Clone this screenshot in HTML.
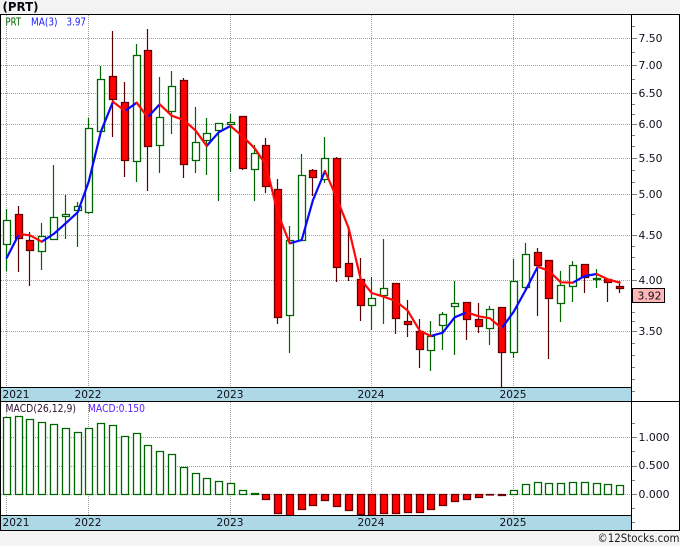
<!DOCTYPE html>
<html><head><meta charset="utf-8"><title>(PRT)</title>
<style>
html,body{margin:0;padding:0;background:#f3f3f3;width:680px;height:546px;overflow:hidden}
svg{display:block}
text{font-family:"DejaVu Sans","Liberation Sans",sans-serif;font-size:11px;fill:#10101c}
</style></head><body>
<svg width="680" height="546" viewBox="0 0 680 546" xmlns="http://www.w3.org/2000/svg">
<rect width="680" height="546" fill="#f3f3f3"/>
<rect x="0" y="14" width="680" height="516" fill="#fff"/>
<!-- grid -->
<g stroke="#a0a0a0" stroke-width="1" stroke-dasharray="1 1" fill="none">
<path d="M1 38.500H632M1 65.500H632M1 93.500H632M1 124.500H632M1 158.500H632M1 194.500H632M1 235.500H632M1 280.500H632M1 331.500H632"/>
<path d="M1 437.500H632M1 466.500H632M1 494.500H632"/>
<path d="M6.500 15V387M88.500 15V387M230.500 15V387M371.500 15V387M513.500 15V387"/>
<path d="M6.500 402V515M88.500 402V515M230.500 402V515M371.500 402V515M513.500 402V515"/>
</g>
<!-- green candles -->
<path stroke="#006400" stroke-width="1.200" fill="none" d="M6.500 209V271M41.500 223V270M53.500 165V239M65.500 195V239M77.500 202V247M88.500 118V214M100.500 66V132M136.500 44V182M159.500 77V173M171.500 71V134M195.500 107V173M206.500 118V175M218.500 124V201M230.500 114V172M254.500 145V201M289.500 226V353M301.500 154V240M324.500 137V183M371.500 277V330M383.500 239V324M430.500 321V371M442.500 312V350M454.500 281V355M489.500 306V345M513.500 259V358M525.500 243V290M560.500 271V322M572.500 261V302M596.500 269V288"/>
<path stroke="#006400" stroke-width="1.300" fill="#fff" d="M3.500 220.500h7v24h-7zM38.500 236.500h7v15h-7zM50.500 217.500h7v22h-7zM62.500 214.500h7v2h-7zM74.500 206.500h7v4h-7zM85.500 128.500h7v84h-7zM97.500 79.500h7v52h-7zM133.500 55.500h7v106h-7zM156.500 117.500h7v28h-7zM168.500 86.500h7v25h-7zM192.500 142.500h7v18h-7zM203.500 133.500h7v7h-7zM215.500 123.500h7v7h-7zM227.500 122.500h7v2h-7zM251.500 153.500h7v16h-7zM286.500 240.500h7v75h-7zM298.500 175.500h7v65h-7zM321.500 158.500h7v21h-7zM368.500 298.500h7v7h-7zM380.500 288.500h7v7h-7zM427.500 336.500h7v14h-7zM439.500 314.500h7v11h-7zM451.500 303.500h7v3h-7zM486.500 309.500h7v19h-7zM510.500 281.500h7v71h-7zM522.500 254.500h7v33h-7zM557.500 285.500h7v18h-7zM569.500 265.500h7v21h-7zM593.500 278.500h7v1h-7z"/>
<!-- red candles -->
<path stroke="#5a0000" stroke-width="1.200" fill="none" d="M18.500 206V272M29.500 232V286M112.500 31V137M124.500 82V177M147.500 29V191M183.500 78V178M242.500 116V170M265.500 138V193M277.500 179V324M312.500 169V196M336.500 157V282M348.500 226V281M360.500 258V321M395.500 283V334M407.500 300V337M419.500 319V368M466.500 302V340M478.500 303V333M501.500 307V387M537.500 248V316M548.500 260V359M584.500 264V293M607.500 279V302M619.500 281V293"/>
<path stroke="#660000" stroke-width="1.300" fill="#f00" d="M15.500 214.500h7v24h-7zM26.500 240.500h7v10h-7zM109.500 76.500h7v23h-7zM121.500 102.500h7v58h-7zM144.500 50.500h7v96h-7zM180.500 80.500h7v84h-7zM239.500 116.500h7v52h-7zM262.500 145.500h7v41h-7zM274.500 189.500h7v128h-7zM309.500 170.500h7v7h-7zM333.500 158.500h7v109h-7zM345.500 263.500h7v13h-7zM357.500 279.500h7v26h-7zM392.500 283.500h7v35h-7zM404.500 321.500h7v3h-7zM416.500 331.500h7v18h-7zM463.500 302.500h7v17h-7zM475.500 319.500h7v7h-7zM498.500 307.500h7v45h-7zM534.500 252.500h7v13h-7zM545.500 260.500h7v38h-7zM581.500 264.500h7v13h-7zM604.500 279.500h7v3h-7zM616.500 286.500h7v2h-7z"/>
<!-- moving average -->
<g fill="none" stroke-width="2.200" stroke-linejoin="round" stroke-linecap="round">
<g stroke="#0808ff">
<polyline points="6.800,257.700 19,234"/>
<polyline points="41.700,241.700 53.700,234 65.700,223.300 77.700,212.300 88.700,181.700 101,131.300 113,101.700"/>
<polyline points="125,111 136.700,102.700"/>
<polyline points="147.700,117.300 159.700,104.300"/>
<polyline points="206.700,146 218.700,132.300 230.500,126"/>
<polyline points="289.700,243.300 301.700,240 313,200 325,171"/>
<polyline points="430.700,336 442.700,332.700 454.700,317.300 466.700,312.300"/>
<polyline points="501.700,328.300 513.700,311.700 525.700,290 537.700,266.700"/>
<polyline points="572.700,282.700 584.700,276 596.700,274"/>
</g>
<g stroke="#ff0808">
<polyline points="19,234 30,235.300 41.700,241.700"/>
<polyline points="113,101.700 125,111"/>
<polyline points="136.700,102.700 147.700,117.300"/>
<polyline points="159.700,104.300 171.700,115.700 183.700,120 195.700,130.700 206.700,146"/>
<polyline points="230.500,126 243,136.700 254.700,148.300 266,165 277.700,213 289.700,243.300"/>
<polyline points="325,171 336.700,198 348.700,228.300 360.700,279.300 371.700,293 383.700,296.700 395.700,301 407.700,310.700 419.700,330.700 430.700,336"/>
<polyline points="466.700,312.300 478.700,316.300 490,318.300 501.700,328.300"/>
<polyline points="537.700,266.700 548.700,270.700 560.700,282.300 572.700,282.700"/>
<polyline points="596.700,274 607.700,279.300 619.700,282.700"/>
</g>
</g>
<!-- MACD bars -->
<path stroke="#006400" stroke-width="1.300" fill="#fff" d="M3.500 417.500h7v77h-7zM15.500 416.500h7v78h-7zM26.500 419.500h7v75h-7zM38.500 422.500h7v72h-7zM50.500 424.500h7v70h-7zM62.500 428.500h7v66h-7zM74.500 432.500h7v62h-7zM85.500 428.500h7v66h-7zM97.500 423.500h7v71h-7zM109.500 425.500h7v69h-7zM121.500 436.500h7v58h-7zM133.500 433.500h7v61h-7zM144.500 445.500h7v49h-7zM156.500 451.500h7v43h-7zM168.500 454.500h7v40h-7zM180.500 467.500h7v27h-7zM192.500 473.500h7v21h-7zM203.500 478.500h7v16h-7zM215.500 481.500h7v13h-7zM227.500 483.500h7v11h-7zM239.500 490.500h7v4h-7zM251.500 493.500h7v1h-7zM510.500 490.500h7v4h-7zM522.500 484.500h7v10h-7zM534.500 482.500h7v12h-7zM545.500 483.500h7v11h-7zM557.500 483.500h7v11h-7zM569.500 482.500h7v12h-7zM581.500 482.500h7v12h-7zM593.500 483.500h7v11h-7zM604.500 484.500h7v10h-7zM616.500 485.500h7v9h-7z"/>
<path stroke="#660000" stroke-width="1.300" fill="#f00" d="M262.500 494.500h7v5h-7zM274.500 494.500h7v19h-7zM286.500 494.500h7v25h-7zM298.500 494.500h7v15h-7zM309.500 494.500h7v11h-7zM321.500 494.500h7v6h-7zM333.500 494.500h7v12h-7zM345.500 494.500h7v16h-7zM357.500 494.500h7v20h-7zM368.500 494.500h7v25h-7zM380.500 494.500h7v19h-7zM392.500 494.500h7v19h-7zM404.500 494.500h7v18h-7zM416.500 494.500h7v18h-7zM427.500 494.500h7v15h-7zM439.500 494.500h7v11h-7zM451.500 494.500h7v7h-7zM463.500 494.500h7v5h-7zM475.500 494.500h7v3h-7zM486.500 494.500h7v0.500h-7zM498.500 494.500h7v1h-7z"/>
<!-- bands -->
<rect x="1" y="388" width="630" height="13" fill="#add8e6"/>
<rect x="1" y="516" width="630" height="14" fill="#add8e6"/>
<rect x="0" y="530" width="680" height="16" fill="#f3f3f3"/>
<!-- frame -->
<path stroke="#000" fill="none" d="M0 14.500H680M0 387.500H632M0 401.500H680M0 515.500H632M0 530.500H680M0.500 14V531M631.500 14V531M679.500 14V531"/>
<!-- ticks -->
<path stroke="#808080" fill="none" d="M632 26.500h3M632 52.500h3M632 79.500h3M632 104.500h3M632 114.500h3M632 135.500h3M632 146.500h3M632 170.500h3M632 182.500h3M632 214.500h3M632 246.500h3M632 257.500h3M632 269.500h3M632 312.500h3M632 321.500h3M632 343.500h3M632 355.500h3M632 367.500h3M632 379.500h3M632 391.500h3M632 423.500h3M632 451.500h3M632 480.500h3M632 508.500h3M632 522.500h3M632 38.500h5M632 65.500h5M632 93.500h5M632 124.500h5M632 158.500h5M632 194.500h5M632 235.500h5M632 280.500h5M632 331.500h5M632 437.500h5M632 466.500h5M632 494.500h5"/>
<!-- labels -->
<text x="2.500" y="11" style="font-weight:bold;font-size:12px;fill:#0a0a14" textLength="36" lengthAdjust="spacingAndGlyphs">(PRT)</text>
<text x="5.500" y="25.500" style="font-size:10.500px;fill:#006400" textLength="15.500" lengthAdjust="spacingAndGlyphs">PRT</text>
<text x="31" y="25.500" style="font-size:10.500px;fill:#1818ff" textLength="26.500" lengthAdjust="spacingAndGlyphs">MA(3)</text>
<text x="66.500" y="25.500" style="font-size:10.500px;fill:#1818ff" textLength="19.500" lengthAdjust="spacingAndGlyphs">3.97</text>
<text x="5.500" y="412" style="font-size:10.500px;fill:#301030" textLength="70.500" lengthAdjust="spacingAndGlyphs">MACD(26,12,9)</text>
<text x="88" y="412" style="font-size:10.500px;fill:#5a20ff" textLength="57" lengthAdjust="spacingAndGlyphs">MACD:0.150</text>
<g>
<text x="638.500" y="42" textLength="24" lengthAdjust="spacingAndGlyphs">7.50</text>
<text x="638.500" y="69" textLength="24" lengthAdjust="spacingAndGlyphs">7.00</text>
<text x="638.500" y="97" textLength="24" lengthAdjust="spacingAndGlyphs">6.50</text>
<text x="638.500" y="128" textLength="24" lengthAdjust="spacingAndGlyphs">6.00</text>
<text x="638.500" y="162" textLength="24" lengthAdjust="spacingAndGlyphs">5.50</text>
<text x="638.500" y="198" textLength="24" lengthAdjust="spacingAndGlyphs">5.00</text>
<text x="638.500" y="239" textLength="24" lengthAdjust="spacingAndGlyphs">4.50</text>
<text x="638.500" y="284" textLength="24" lengthAdjust="spacingAndGlyphs">4.00</text>
<text x="638.500" y="335" textLength="24" lengthAdjust="spacingAndGlyphs">3.50</text>
<text x="638.500" y="441" textLength="31" lengthAdjust="spacingAndGlyphs">1.000</text>
<text x="638.500" y="469" textLength="31" lengthAdjust="spacingAndGlyphs">0.500</text>
<text x="638.500" y="498" textLength="31" lengthAdjust="spacingAndGlyphs">0.000</text>
</g>
<rect x="632.500" y="288.500" width="32" height="14" fill="#ffb6b6" stroke="#000"/>
<text x="637.500" y="299.500" textLength="24" lengthAdjust="spacingAndGlyphs">3.92</text>
<g>
<text x="2.500" y="398" textLength="27" lengthAdjust="spacingAndGlyphs">2021</text>
<text x="74.500" y="398" textLength="27" lengthAdjust="spacingAndGlyphs">2022</text>
<text x="216.500" y="398" textLength="27" lengthAdjust="spacingAndGlyphs">2023</text>
<text x="357.500" y="398" textLength="27" lengthAdjust="spacingAndGlyphs">2024</text>
<text x="499.500" y="398" textLength="27" lengthAdjust="spacingAndGlyphs">2025</text>
<text x="2.500" y="526" textLength="27" lengthAdjust="spacingAndGlyphs">2021</text>
<text x="74.500" y="526" textLength="27" lengthAdjust="spacingAndGlyphs">2022</text>
<text x="216.500" y="526" textLength="27" lengthAdjust="spacingAndGlyphs">2023</text>
<text x="357.500" y="526" textLength="27" lengthAdjust="spacingAndGlyphs">2024</text>
<text x="499.500" y="526" textLength="27" lengthAdjust="spacingAndGlyphs">2025</text>
</g>
<text x="597.500" y="542" style="font-size:11.500px;fill:#1a1a1a" textLength="82" lengthAdjust="spacingAndGlyphs">©12Stocks.com</text>
</svg>
</body></html>
